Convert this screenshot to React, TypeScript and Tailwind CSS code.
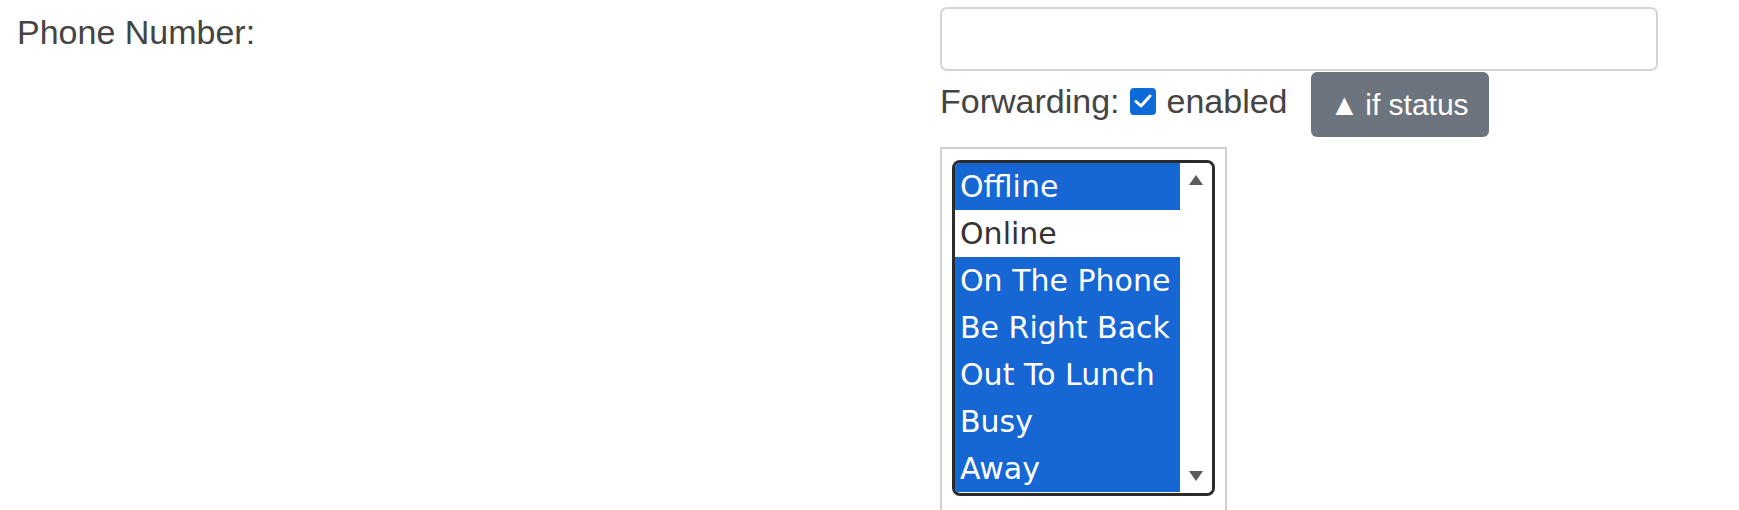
const statuses = [
  { label: 'Offline', selected: true },
  { label: 'Online', selected: false },
  { label: 'On The Phone', selected: true },
  { label: 'Be Right Back', selected: true },
  { label: 'Out To Lunch', selected: true },
  { label: 'Busy', selected: true },
  { label: 'Away', selected: true },
];

function StatusList() {
  return (
    <div className="flex w-[263px] h-[336px] border-[3px] border-[#2b2b2b] rounded-[8px] overflow-hidden bg-white">
      <div className="w-[225px] flex flex-col overflow-hidden font-['DejaVu_Sans',sans-serif] text-[30px]">
        {statuses.map((s) => (
          <div
            key={s.label}
            className={`h-[47px] shrink-0 flex items-center pl-[5px] whitespace-nowrap ${
              s.selected ? 'bg-[#1666d4] text-white' : 'bg-white text-[#333]'
            }`}
          >
            {s.label}
          </div>
        ))}
      </div>
      {/* scrollbar */}
      <div className="w-[32px] flex flex-col items-center justify-between py-[12px] bg-white">
        <svg width="14" height="10" viewBox="0 0 14 10">
          <path d="M7 0 L14 10 L0 10 Z" fill="#5a5a5a" />
        </svg>
        <svg width="14" height="10" viewBox="0 0 14 10">
          <path d="M0 0 L14 0 L7 10 Z" fill="#5a5a5a" />
        </svg>
      </div>
    </div>
  );
}

export default function App() {
  return (
    <div className="w-[1739px] h-[510px] overflow-hidden bg-white font-['Liberation_Sans',Arial,sans-serif] text-[#444]">
      <div className="flex">
        <div className="w-[940px] pl-[17px] pt-[7px] text-[34px] leading-[51px]">Phone Number:</div>

        <div className="w-[718px] pt-[7px]">
          <div className="h-[64px] rounded-[7px] border-2 border-[#d4d4d4] bg-white" />

          <div className="flex items-center text-[34px] leading-[51px]">
            <div className="flex items-center pb-[6px]">
              <span>Forwarding:</span>
              <span className="ml-[10px] w-[26px] h-[27px] rounded-[4px] bg-[#0b6bd9] flex items-center justify-center">
                <svg width="18" height="16" viewBox="0 0 18 16">
                  <path d="M2 8.5 L7 13 L16 3" fill="none" stroke="white" strokeWidth="3" strokeLinecap="round" strokeLinejoin="round" />
                </svg>
              </span>
              <span className="ml-[11px]">enabled</span>
            </div>
            <button className="ml-[23px] mt-[1px] h-[65px] pl-[19px] pr-[20px] rounded-[6px] bg-[#6c757d] text-white text-[30px] leading-none flex items-center">
              <span>▲</span>
              <span className="ml-[6px]">if status</span>
            </button>
          </div>

          <div className="mt-[10px] w-[287px] h-[400px] border-2 border-[#d0d0d0] pt-[11px] pl-[10px]">
            <StatusList />
          </div>
        </div>
      </div>
    </div>
  );
}
